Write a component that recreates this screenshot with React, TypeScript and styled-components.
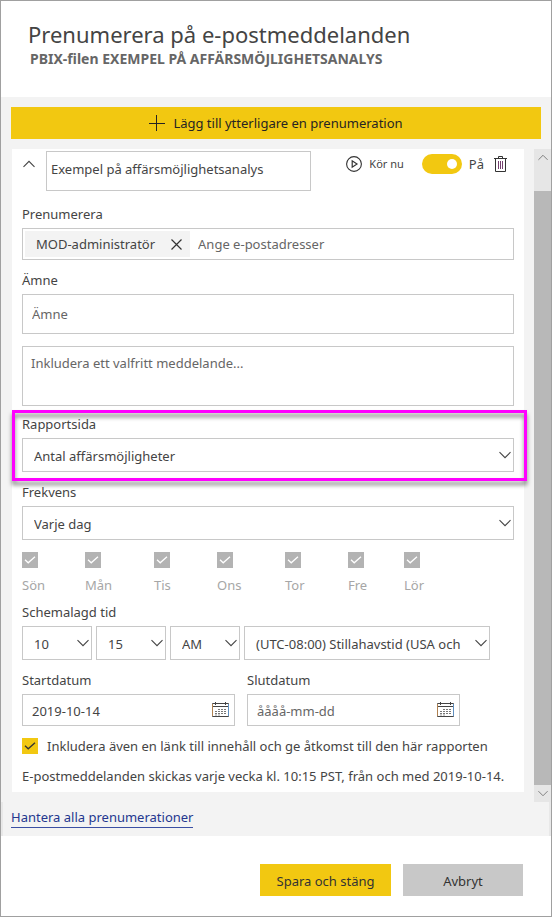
import React from 'react';
import styled, { createGlobalStyle } from 'styled-components';

const yellow = '#f2c811';
const line = '#c8c8c8';
const ink = '#444444';

const GlobalStyle = createGlobalStyle`
  *, *::before, *::after { box-sizing: border-box; }
  body { margin: 0; background: #ffffff; }
  body, button, input, select, textarea {
    font-family: "Noto Sans", "Open Sans", sans-serif;
    font-size: 13px;
    line-height: 20px;
    color: ${ink};
  }
  button { border: 0; padding: 0; background: none; cursor: pointer; }
  svg { display: block; }
`;

const Dialog = styled.main`
  display: flex;
  flex-direction: column;
  min-height: 100vh;
  border: 1px solid #a0a0a0;
  background: #ffffff;
`;

const Header = styled.header`
  padding: 17px 27px 29px;
`;

const Title = styled.h1`
  margin: 0;
  font-size: 22px;
  line-height: 32px;
  font-weight: 400;
`;

const Subtitle = styled.p`
  margin: 0 2px;
  font-size: 14px;
  line-height: 18px;
  font-weight: 700;
  color: #666666;
`;

const Body = styled.section`
  background: #f3f3f3;
`;

const AddButton = styled.button`
  display: flex;
  align-items: center;
  justify-content: center;
  gap: 8px;
  width: calc(100% - 20px);
  height: 32px;
  margin: 10px 10px 0;
  background: ${yellow};
  color: #252423;
`;

const ScrollRegion = styled.div`
  display: flex;
  gap: 10px;
  margin-top: 10px;
  padding-left: 11px;
`;

const Card = styled.form`
  flex: 1;
  min-width: 0;
  margin-bottom: 10px;
  padding: 2px 10px 6px;
  background: #ffffff;
`;

const ScrollBar = styled.div`
  display: flex;
  flex-direction: column;
  flex: none;
  width: 17px;
  background: #e6e6e6;
  color: #777777;
`;

const ScrollArrow = styled.button`
  display: grid;
  place-items: center;
  height: 17px;
  color: inherit;
`;

const ScrollThumb = styled.div`
  flex: 1;
  margin-top: 25px;
  background: #b8b8b8;
`;

const CardHead = styled.div`
  display: flex;
  align-items: flex-start;
  margin-bottom: 13px;
`;

const CollapseButton = styled.button`
  display: flex;
  align-items: center;
  width: 24px;
  height: 26px;
  padding-left: 1px;
`;

const TextBox = styled.input<{ $height?: number }>`
  display: block;
  width: 100%;
  min-width: 0;
  height: ${(p) => p.$height ?? 32}px;
  padding: 0 9px;
  border: 1px solid ${line};
  border-radius: 0;
  background: #ffffff;
  &::placeholder { color: #666666; opacity: 1; }
`;

const NameBox = styled(TextBox)`
  flex: 0 1 265px;
  padding: 0 4px 4px;
`;

const Actions = styled.div`
  display: flex;
  align-items: center;
  height: 26px;
  margin-left: auto;
`;

const RunButton = styled.button`
  display: flex;
  align-items: center;
  gap: 7px;
  margin-right: 18px;
  font-size: 11px;
`;

const SwitchLabel = styled.label`
  display: flex;
  align-items: center;
  gap: 7px;
`;

const Switch = styled.input`
  appearance: none;
  display: flex;
  align-items: center;
  justify-content: flex-end;
  width: 40px;
  height: 20px;
  margin: 0;
  padding: 0 5px;
  border-radius: 10px;
  background: ${yellow};
  &::before {
    content: "";
    width: 10px;
    height: 10px;
    border-radius: 5px;
    background: #ffffff;
  }
  &:not(:checked) { justify-content: flex-start; background: #a6a6a6; }
`;

const DeleteButton = styled.button`
  padding: 0 7px 0 10px;
`;

const Field = styled.div<{ $top?: number }>`
  position: relative;
  margin-top: ${(p) => p.$top ?? 10}px;
`;

const Label = styled.label`
  display: block;
  margin-bottom: 4px;
`;

const Recipients = styled.div`
  display: flex;
  height: 32px;
  padding: 2px;
  border: 1px solid ${line};
`;

const Chip = styled.span`
  display: flex;
  align-items: center;
  gap: 16px;
  padding: 0 8px 0 11px;
  background: #f3f3f3;
  white-space: nowrap;
`;

const RecipientInput = styled.input`
  flex: 1;
  min-width: 0;
  padding: 0 8px;
  border: 0;
  outline: 0;
  background: none;
  &::placeholder { color: #666666; opacity: 1; }
`;

const Message = styled.textarea`
  display: block;
  width: 100%;
  height: 60px;
  margin-top: 12px;
  padding: 6px 8px;
  border: 1px solid ${line};
  border-radius: 0;
  resize: none;
  &::placeholder { color: #666666; opacity: 1; }
`;

const Highlight = styled.div`
  position: absolute;
  inset: -4px -13px -9px -10px;
  border: 3px solid #ff00ff;
  filter: drop-shadow(0 4px 2px rgba(0, 0, 0, 0.5));
  pointer-events: none;
`;

const SelectFrame = styled.span`
  display: grid;
  grid-template-columns: minmax(0, 1fr);
  align-items: center;
  height: 34px;
  & > * { grid-area: 1 / 1; }
  & > svg { justify-self: end; margin-right: 3px; pointer-events: none; }
`;

const SelectBox = styled.select`
  appearance: none;
  width: 100%;
  height: 100%;
  padding: 2px 18px 0 11px;
  border: 1px solid ${line};
  border-radius: 0;
  background: #ffffff;
`;

const Days = styled.div`
  display: grid;
  grid-template-columns: 63px 69px 63px 68px 63px 56px auto;
  margin: 12px 0 7px;
`;

const Day = styled.label`
  display: flex;
  flex-direction: column;
  gap: 7px;
  color: #a6a6a6;
`;

const CheckFrame = styled.span`
  display: grid;
  width: 16px;
  height: 16px;
  place-items: center;
  & > * { grid-area: 1 / 1; }
  & > svg { pointer-events: none; }
`;

const CheckBox = styled.input`
  appearance: none;
  width: 16px;
  height: 16px;
  margin: 0;
  background: ${yellow};
  &:disabled { background: #b3b3b3; }
`;

const TimeRow = styled.div`
  display: grid;
  grid-template-columns: 70px 70px 70px minmax(0, 246px);
  gap: 4px;
`;

const DateRow = styled.div`
  display: grid;
  grid-template-columns: repeat(2, minmax(0, 213px));
  gap: 12px;
`;

const DateFrame = styled.div`
  display: flex;
  align-items: center;
  height: 32px;
  padding-right: 5px;
  border: 1px solid ${line};
`;

const DateInput = styled(RecipientInput)`
  padding: 2px 9px 0;
`;

const LinkOption = styled.label`
  display: flex;
  align-items: center;
  gap: 9px;
  margin-top: 10px;
  white-space: nowrap;
`;

const Summary = styled.p`
  margin: 10px 0 0;
  white-space: nowrap;
`;

const ManageRow = styled.div`
  height: 34px;
  padding: 5px 8px;
  border: solid #e8e8e8;
  border-width: 0 2px;
`;

const ManageLink = styled.a`
  display: inline-block;
  border-bottom: 1px solid #3b4fa3;
  color: #24378f;
  text-decoration: none;
`;

const Footer = styled.footer`
  display: flex;
  justify-content: flex-end;
  gap: 12px;
  padding: 28px 28px 20px;
`;

const FooterButton = styled.button<{ $primary?: boolean }>`
  width: ${(p) => (p.$primary ? 131 : 120)}px;
  height: 32px;
  padding-top: 2px;
  background: ${(p) => (p.$primary ? yellow : '#c8c8c8')};
  color: #333333;
`;

const Chevron = ({ up = false, width = 12 }: { up?: boolean; width?: number }) => (
  <svg width={width} height={width / 2 + 2} viewBox="0 0 12 8" fill="none" stroke="currentColor" strokeWidth="1.1" aria-hidden="true">
    <path d={up ? 'M.5 6.8 6 1.3l5.5 5.5' : 'M.5 1.2 6 6.7l5.5-5.5'} />
  </svg>
);

const PlusIcon = () => (
  <svg width="16" height="16" viewBox="0 0 16 16" stroke="#252423" aria-hidden="true">
    <path d="M0 8.5h16M7.5 0v16" />
  </svg>
);

const PlayIcon = () => (
  <svg width="16" height="16" viewBox="0 0 16 16" fill="none" stroke="#333" aria-hidden="true">
    <circle cx="8" cy="8" r="7.4" strokeWidth="1.1" />
    <path d="M6.2 4.8v6.4L11 8z" strokeWidth="1.2" />
  </svg>
);

const TrashIcon = () => (
  <svg width="13" height="16" viewBox="0 0 13 16" fill="none" stroke="#333" aria-hidden="true">
    <path d="M0 2.5h13M4.5 2.5v-2h4v2M1.5 2.5v13h10v-13" />
    <path d="M4.5 5v8M6.5 5v8M8.5 5v8" stroke="#75406f" />
  </svg>
);

const CloseIcon = () => (
  <svg width="11" height="11" viewBox="0 0 11 11" stroke="#333" strokeWidth="1.2" aria-hidden="true">
    <path d="m.5.5 10 10M10.5.5l-10 10" />
  </svg>
);

const CheckIcon = ({ color }: { color: string }) => (
  <svg width="12" height="8" viewBox="0 0 12 8" fill="none" stroke={color} strokeWidth="1.3" aria-hidden="true">
    <path d="m1 3.8 3.2 3L11 .8" />
  </svg>
);

const CalendarIcon = () => (
  <svg width="17" height="16" viewBox="0 0 17 16" fill="none" stroke="#444" aria-hidden="true">
    <path d="M.5 1.5h16v13H.5zM1 4.5h15M3.5 0v3M13.5 0v3" />
    <path d="M6 7.5h8M3 9.5h11M3 11.5h11" stroke="#777" strokeDasharray="2 1" />
    <path d="M3 13h6" stroke="#999" strokeDasharray="2 1" />
    <path d="M.5 2v12" stroke="#b0814f" />
    <path d="M16.5 2v12" stroke="#5f8fc0" />
  </svg>
);

const Select = ({ id, value, label }: { id?: string; value: string; label?: string }) => (
  <SelectFrame>
    <SelectBox id={id} aria-label={label} defaultValue={value}>
      <option>{value}</option>
    </SelectBox>
    <Chevron />
  </SelectFrame>
);

const DateField = ({ id, label, value }: { id: string; label: string; value?: string }) => (
  <div>
    <Label htmlFor={id}>{label}</Label>
    <DateFrame>
      <DateInput id={id} defaultValue={value} placeholder="åååå-mm-dd" />
      <button type="button" aria-label={`Välj ${label.toLowerCase()}`}>
        <CalendarIcon />
      </button>
    </DateFrame>
  </div>
);

const days = ['Sön', 'Mån', 'Tis', 'Ons', 'Tor', 'Fre', 'Lör'];

export default function App() {
  return (
    <>
      <GlobalStyle />
      <Dialog>
        <Header>
          <Title>Prenumerera på e-postmeddelanden</Title>
          <Subtitle>PBIX-filen EXEMPEL PÅ AFFÄRSMÖJLIGHETSANALYS</Subtitle>
        </Header>
        <Body>
          <AddButton type="button">
            <PlusIcon />
            Lägg till ytterligare en prenumeration
          </AddButton>
          <ScrollRegion>
            <Card onSubmit={(e) => e.preventDefault()}>
              <CardHead>
                <CollapseButton type="button" aria-label="Dölj">
                  <Chevron up />
                </CollapseButton>
                <NameBox $height={40} aria-label="Namn" defaultValue="Exempel på affärsmöjlighetsanalys" />
                <Actions>
                  <RunButton type="button">
                    <PlayIcon />
                    Kör nu
                  </RunButton>
                  <SwitchLabel>
                    <Switch type="checkbox" role="switch" defaultChecked />
                    På
                  </SwitchLabel>
                  <DeleteButton type="button" aria-label="Ta bort">
                    <TrashIcon />
                  </DeleteButton>
                </Actions>
              </CardHead>

              <Field>
                <Label htmlFor="recipients">Prenumerera</Label>
                <Recipients>
                  <Chip>
                    MOD-administratör
                    <button type="button" aria-label="Ta bort MOD-administratör">
                      <CloseIcon />
                    </button>
                  </Chip>
                  <RecipientInput id="recipients" placeholder="Ange e-postadresser" />
                </Recipients>
              </Field>

              <Field>
                <Label htmlFor="subject">Ämne</Label>
                <TextBox $height={40} id="subject" placeholder="Ämne" />
              </Field>
              <Message aria-label="Meddelande" placeholder="Inkludera ett valfritt meddelande..." />

              <Field $top={8}>
                <Label htmlFor="page">Rapportsida</Label>
                <Select id="page" value="Antal affärsmöjligheter" />
                <Highlight />
              </Field>

              <Field>
                <Label htmlFor="frequency">Frekvens</Label>
                <Select id="frequency" value="Varje dag" />
              </Field>

              <Days>
                {days.map((day) => (
                  <Day key={day}>
                    <CheckFrame>
                      <CheckBox type="checkbox" defaultChecked disabled />
                      <CheckIcon color="#ffffff" />
                    </CheckFrame>
                    {day}
                  </Day>
                ))}
              </Days>

              <Label htmlFor="hour">Schemalagd tid</Label>
              <TimeRow>
                <Select id="hour" value="10" />
                <Select label="Minut" value="15" />
                <Select label="AM eller PM" value="AM" />
                <Select label="Tidszon" value="(UTC-08:00) Stillahavstid (USA och" />
              </TimeRow>

              <Field>
                <DateRow>
                  <DateField id="start" label="Startdatum" value="2019-10-14" />
                  <DateField id="end" label="Slutdatum" />
                </DateRow>
              </Field>

              <LinkOption>
                <CheckFrame>
                  <CheckBox type="checkbox" defaultChecked />
                  <CheckIcon color="#333333" />
                </CheckFrame>
                Inkludera även en länk till innehåll och ge åtkomst till den här rapporten
              </LinkOption>
              <Summary>E-postmeddelanden skickas varje vecka kl. 10:15 PST, från och med 2019-10-14.</Summary>
            </Card>
            <ScrollBar>
              <ScrollArrow type="button" aria-label="Rulla upp">
                <Chevron up width={10} />
              </ScrollArrow>
              <ScrollThumb />
              <ScrollArrow type="button" aria-label="Rulla ned">
                <Chevron width={10} />
              </ScrollArrow>
            </ScrollBar>
          </ScrollRegion>
          <ManageRow>
            <ManageLink href="#prenumerationer">Hantera alla prenumerationer</ManageLink>
          </ManageRow>
        </Body>
        <Footer>
          <FooterButton type="button" $primary>
            Spara och stäng
          </FooterButton>
          <FooterButton type="button">Avbryt</FooterButton>
        </Footer>
      </Dialog>
    </>
  );
}
